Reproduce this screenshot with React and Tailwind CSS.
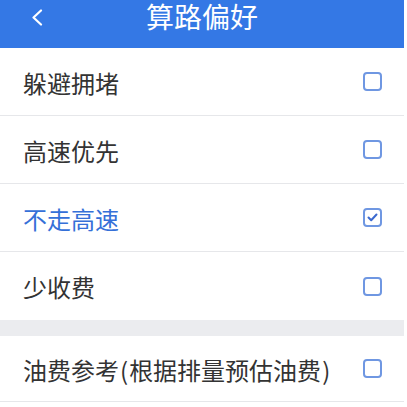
import React from 'react';

const font = { fontFamily: '"Noto Sans CJK SC", "Noto Sans", sans-serif' };

function CheckBox({ checked }) {
  return (
    <span className="flex h-[19px] w-[19px] items-center justify-center rounded-[4px] border-2 border-[#6f97e2]">
      {checked && (
        <svg width="11" height="9" viewBox="0 0 11 9" fill="none">
          <path d="M1.5 4.5 L4.2 7.2 L9.5 1.5" stroke="#3b69cf" strokeWidth="2" strokeLinecap="round" strokeLinejoin="round" />
        </svg>
      )}
    </span>
  );
}

function Row({ label, checked, last }) {
  return (
    <div className={`flex h-[68px] items-center justify-between pl-[23px] pr-[22px] ${last ? '' : 'border-b border-[#e6e7ea]'}`}>
      <span className={`pt-[2px] text-[24px] leading-none ${checked ? 'text-[#3570d8]' : 'text-[#333333]'}`}>{label}</span>
      <CheckBox checked={checked} />
    </div>
  );
}

export default function App() {
  const rows = [
    { id: 'jam', label: '躲避拥堵', checked: false },
    { id: 'fast', label: '高速优先', checked: false },
    { id: 'nohw', label: '不走高速', checked: true },
    { id: 'fee', label: '少收费', checked: false },
  ];

  return (
    <div className="h-[407px] w-[407px] overflow-hidden bg-white" style={font}>
      <div className="w-[404px]">
        <header className="relative flex h-[48px] items-start justify-center bg-[#3478e5]">
          <svg className="absolute left-[31px] top-[9px]" width="12" height="17" viewBox="0 0 12 17" fill="none">
            <path d="M10 1.5 L2.5 8.5 L10 15.5" stroke="white" strokeWidth="2.2" strokeLinecap="round" strokeLinejoin="round" />
          </svg>
          <h1 className="text-[28px] leading-[32px] text-white">算路偏好</h1>
        </header>

        {rows.map((r) => (
          <Row key={r.id} label={r.label} checked={r.checked} last={r.id === 'fee'} />
        ))}

        <div className="h-[16px] bg-[#ebecef]" />

        <div className="flex h-[66px] items-center justify-between border-b border-[#e6e7ea] pl-[23px] pr-[22px]">
          <span className="pt-[2px] text-[24px] leading-none text-[#333333]">
            油费参考<span className="px-[1px]">(</span>根据排量预估油费<span className="px-[1px]">)</span>
          </span>
          <CheckBox checked={false} />
        </div>
      </div>
    </div>
  );
}
